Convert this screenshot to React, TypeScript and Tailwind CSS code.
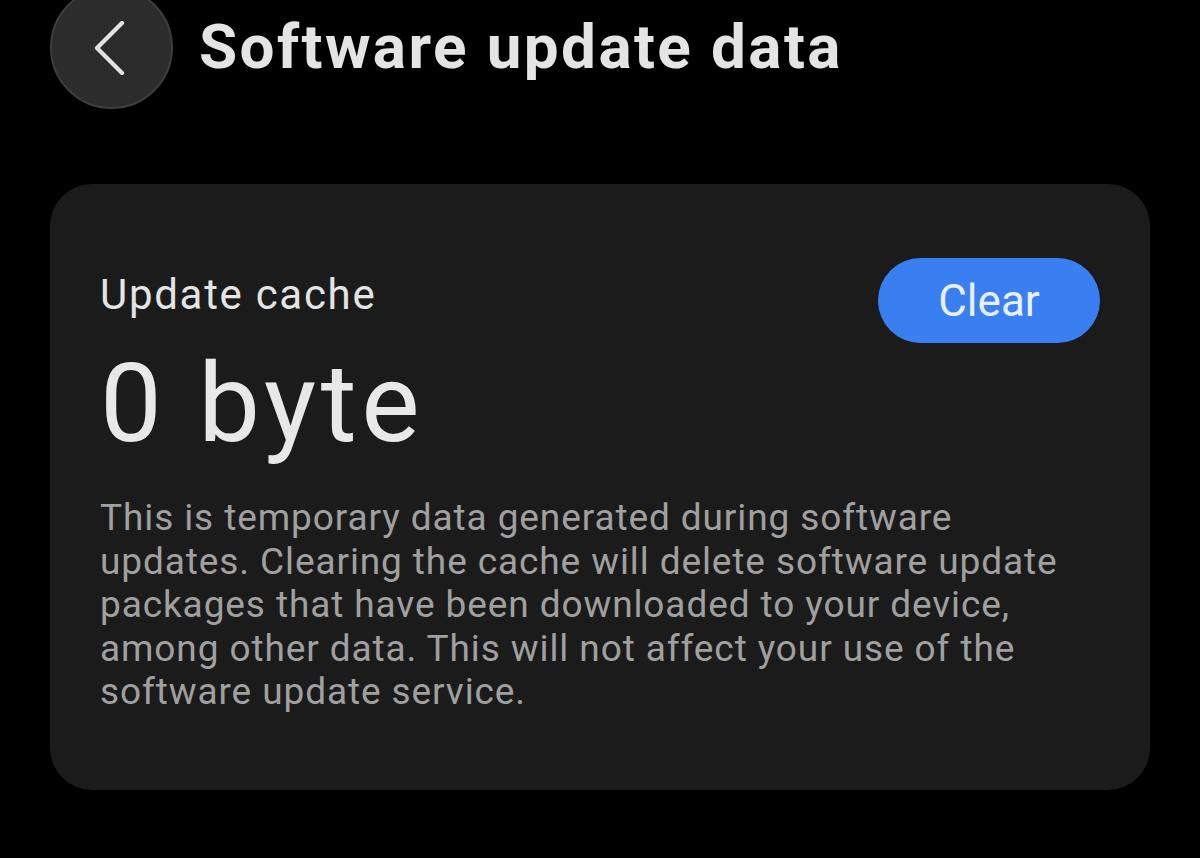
export default function App() {
  return (
    <div className="h-[858px] w-[1200px] overflow-hidden bg-black font-['Roboto',sans-serif] text-[#e6e6e6]">
      <header className="-mt-[14px] flex h-[122px] items-center gap-[26px] pl-[50px]">
        <button className="flex h-[123px] w-[123px] shrink-0 items-center justify-center rounded-full border-2 border-[#3e3e3e] bg-[#2c2c2c]">
          <svg width="32" height="54" viewBox="0 0 32 54" fill="none" className="mt-[2px] -ml-[4px]">
            <polyline points="28,2 3,27 28,52" stroke="#e2e2e2" strokeWidth="4.2" strokeLinecap="round" strokeLinejoin="round" />
          </svg>
        </button>
        <h1 className="text-[62px] font-bold leading-none tracking-[2.4px] text-[#e4e4e4]">Software update data</h1>
      </header>

      <section className="mx-[50px] mt-[76px] h-[606px] rounded-[42px] bg-[#1b1b1b] px-[50px] pt-[74px]">
        <div className="flex items-start justify-between">
          <div className="pt-[13px]">
            <p className="text-[42px] leading-[48px] tracking-[1.7px] text-[#e4e4e4]">Update cache</p>
            <p className="mt-[25px] text-[110px] leading-[120px] tracking-[4.6px] text-[#e8e8e8]">0 byte</p>
          </div>
          <button className="h-[85px] w-[222px] rounded-full bg-[#3a7ff2] text-[44px] text-[#eaf0fb]">Clear</button>
        </div>
        <p className="mt-[32px] w-[975px] text-[37px] leading-[43.6px] tracking-[0.9px] text-[#a0a0a0]">
          This is temporary data generated during software updates. Clearing the cache will delete software update
          packages that have been downloaded to your device, among other data. This will not affect your use of the
          software update service.
        </p>
      </section>
    </div>
  );
}
